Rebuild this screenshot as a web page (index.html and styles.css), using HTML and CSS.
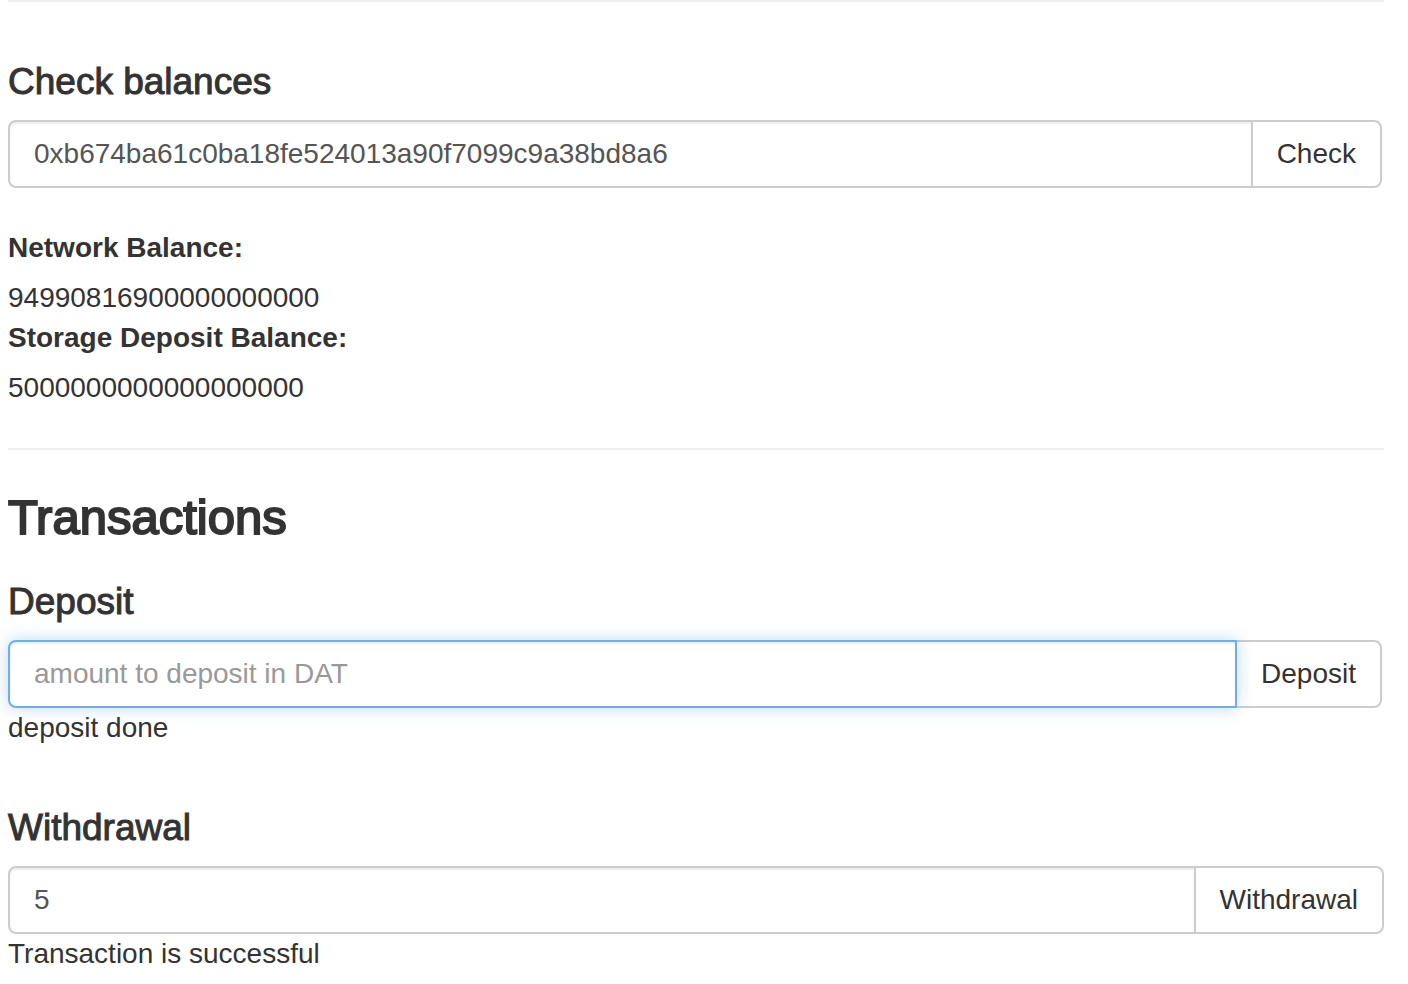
FILE: index.html
```html
<!DOCTYPE html>
<html lang="en">
<head>
<meta charset="utf-8">
<title>Balances and transactions</title>
<link rel="stylesheet" href="styles.css">
</head>
<body>
<main class="page">
  <hr class="divider">
  <section class="block">
    <h3 class="subheading"><label for="address">Check balances</label></h3>
    <form class="input-group input-group-inset">
      <input class="field" id="address" type="text" value="0xb674ba61c0ba18fe524013a90f7099c9a38bd8a6">
      <button class="button" type="button">Check</button>
    </form>
    <dl class="balances">
      <dt class="balance-label">Network Balance:</dt>
      <dd class="balance-value">94990816900000000000</dd>
      <dt class="balance-label">Storage Deposit Balance:</dt>
      <dd class="balance-value">5000000000000000000</dd>
    </dl>
  </section>
  <hr class="divider">
  <h2 class="heading">Transactions</h2>
  <section class="transaction">
    <h3 class="subheading"><label for="deposit">Deposit</label></h3>
    <form class="input-group input-group-inset">
      <input class="field field-active" id="deposit" type="text" placeholder="amount to deposit in DAT">
      <button class="button" type="button">Deposit</button>
    </form>
    <p class="status">deposit done</p>
  </section>
  <section class="block">
    <h3 class="subheading"><label for="withdrawal">Withdrawal</label></h3>
    <form class="input-group">
      <input class="field" id="withdrawal" type="text" value="5">
      <button class="button" type="button">Withdrawal</button>
    </form>
    <p class="status">Transaction is successful</p>
  </section>
</main>
</body>
</html>
```
FILE: styles.css
```css
* {
  box-sizing: border-box;
}

body {
  margin: 0;
  background: #fff;
  color: #333;
  font: 28px/40px "Helvetica Neue", "Liberation Sans", Arial, sans-serif;
}

.page {
  padding: 0 24px 0 8px;
}

.divider {
  height: 2px;
  margin: 0;
  border: 0;
  background: #eee;
}

.block {
  padding-top: 60px;
}

.heading,
.subheading {
  font-weight: 500;
  -webkit-text-stroke: 1px #333;
}

.heading {
  margin: 42px 0 40px;
  font-size: 49px;
  line-height: 50px;
  -webkit-text-stroke-width: 2px;
}

.subheading {
  margin: 0 0 18px;
  font-size: 37px;
  line-height: 40px;
}

.input-group {
  display: flex;
}

.input-group-inset {
  margin-right: 2px;
}

.field {
  flex: 1;
  min-width: 0;
  height: 68px;
  margin: 0;
  padding: 12px 24px;
  border: 2px solid #ccc;
  border-radius: 8px 0 0 8px;
  background: #fff;
  box-shadow: inset 0 2px 2px rgba(0, 0, 0, 0.075);
  color: #555;
  font: inherit;
}

.field::placeholder {
  color: #999;
  opacity: 1;
}

.field:focus,
.field-active {
  position: relative;
  z-index: 1;
  border-color: #72ade4;
  outline: 0;
  box-shadow: inset 0 2px 2px rgba(0, 0, 0, 0.075), 0 0 16px rgba(114, 173, 228, 0.45);
}

.button {
  height: 68px;
  margin: 0 0 0 -2px;
  padding: 12px 24px;
  border: 2px solid #ccc;
  border-radius: 0 8px 8px 0;
  background: #fff;
  color: #333;
  font: inherit;
  cursor: pointer;
}

.balances {
  margin: 40px 0;
}

.balance-label {
  margin-bottom: 10px;
  font-weight: 700;
}

.balance-value {
  margin: 0;
}

.status {
  margin: 0;
}
```
